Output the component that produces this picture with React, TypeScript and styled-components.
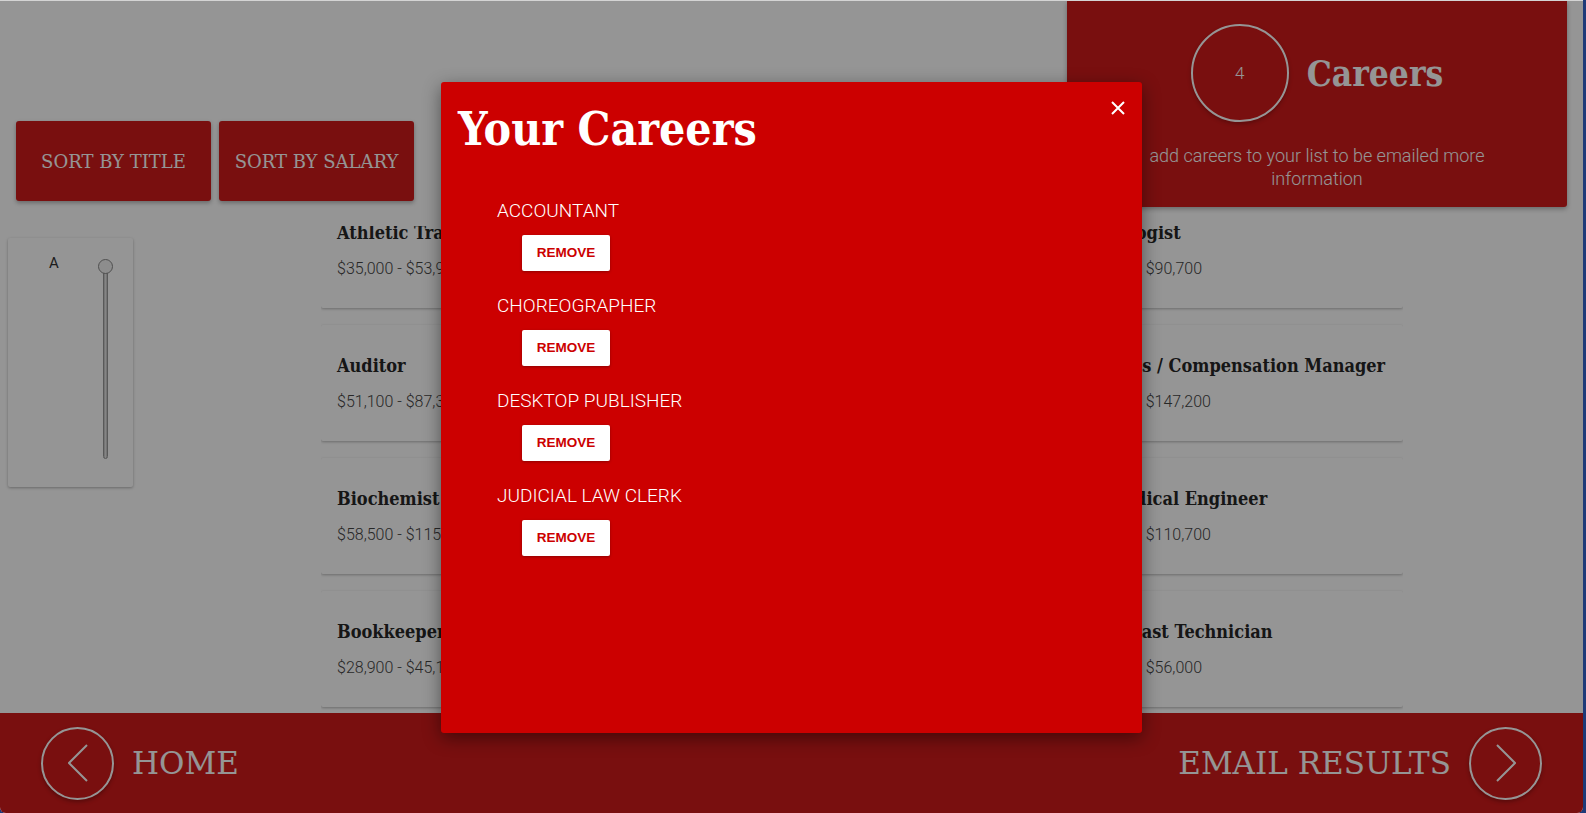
import React, { useLayoutEffect, useRef } from 'react';
import styled, { createGlobalStyle } from 'styled-components';

const slab = `"DejaVu Serif", "Liberation Serif", serif`;
const sans = `Roboto, "Liberation Sans", sans-serif`;
const red = '#d01a1a';

const GlobalStyle = createGlobalStyle`
  html, body {
    margin: 0;
    padding: 0;
    background: #1e3a78;
    overflow: hidden;
  }
  * { box-sizing: border-box; }
`;

const Screen = styled.div`
  position: relative;
  width: 1583px;
  height: 813px;
  background: #fff;
  border-top: 1px solid #d4d4d4;
  border-radius: 0 0 6px 6px;
  overflow: hidden;
  display: flex;
  flex-direction: column;
`;

const Header = styled.header`
  display: flex;
  justify-content: space-between;
  align-items: flex-end;
  height: 206px;
  padding: 0 16px;
  flex-shrink: 0;
`;

const SortGroup = styled.div`
  display: flex;
  gap: 8px;
  margin-bottom: 6px;
`;

const SortButton = styled.button`
  width: 195px;
  height: 80px;
  border: none;
  border-radius: 3px;
  background: ${red};
  color: #fff;
  font-family: ${slab};
  font-size: 18px;
  text-transform: uppercase;
  box-shadow: 0 2px 4px rgba(0, 0, 0, 0.3);
  cursor: pointer;
`;

const CareersPanel = styled.div`
  width: 500px;
  height: 206px;
  background: ${red};
  border-radius: 0 0 3px 3px;
  box-shadow: 0 2px 5px rgba(0, 0, 0, 0.3);
  display: flex;
  flex-direction: column;
  align-items: center;
  padding-top: 23px;
  color: #fff;
`;

const CountRow = styled.div`
  display: flex;
  align-items: center;
  gap: 18px;
`;

const CountCircle = styled.div`
  width: 98px;
  height: 98px;
  border: 2px solid #fff;
  border-radius: 50%;
  display: flex;
  align-items: center;
  justify-content: center;
  font-family: ${sans};
  font-weight: 300;
  font-size: 17px;
  box-shadow: 0 2px 4px rgba(0, 0, 0, 0.25);
`;

const PanelTitle = styled.span`
  font-family: ${slab};
  font-stretch: condensed;
  font-weight: bold;
  font-size: 35px;
`;

const PanelText = styled.p`
  margin: 22px 0 0;
  max-width: 380px;
  text-align: center;
  font-family: ${sans};
  font-weight: 300;
  font-size: 18px;
  line-height: 23px;
`;

const Body = styled.main`
  flex: 1;
  display: flex;
  min-height: 0;
`;

const Sidebar = styled.aside`
  padding: 31px 0 0 8px;
`;

const SliderCard = styled.div`
  width: 125px;
  height: 249px;
  background: #fff;
  border-radius: 2px;
  box-shadow: 0 1px 3px rgba(0, 0, 0, 0.3);
  display: flex;
  justify-content: space-between;
  align-items: flex-start;
  padding: 16px 20px 0 41px;
`;

const Letter = styled.span`
  font-family: ${sans};
  font-size: 15px;
  line-height: 18px;
  color: #333;
`;

const Slider = styled.div`
  position: relative;
  width: 15px;
  height: 200px;
  margin-top: 5px;
`;

const Track = styled.div`
  width: 5px;
  height: 193px;
  margin: 7px auto 0;
  border-radius: 3px;
  border: 1px solid #999;
  background: linear-gradient(to right, #bbb, #e4e4e4, #bbb);
`;

const Thumb = styled.div`
  position: absolute;
  top: 0;
  left: 0;
  width: 15px;
  height: 15px;
  border-radius: 50%;
  border: 1px solid #888;
  background: #f2f2f2;
`;

const ListViewport = styled.section`
  width: 1082px;
  margin: 19px 0 0 188px;
  overflow-y: auto;
  scrollbar-width: none;
  &::-webkit-scrollbar { display: none; }
`;

const CardGrid = styled.div`
  display: grid;
  grid-template-columns: repeat(3, 342px);
  column-gap: 28px;
  row-gap: 17px;
  padding: 0 2px 20px 0;
`;

const Card = styled.div`
  height: 116px;
  background: #fff;
  border-radius: 2px;
  box-shadow: 0 1px 3px rgba(0, 0, 0, 0.28);
  display: flex;
  flex-direction: column;
  justify-content: center;
  padding: 0 16px;
`;

const CardTitle = styled.h3`
  margin: 0 0 15px;
  font-family: ${slab};
  font-stretch: condensed;
  font-weight: bold;
  font-size: 18px;
  line-height: 22px;
  color: #262626;
  white-space: nowrap;
`;

const CardSalary = styled.span`
  font-family: ${sans};
  font-weight: 300;
  font-size: 16px;
  line-height: 19px;
  color: #444;
`;

const Footer = styled.footer`
  height: 100px;
  flex-shrink: 0;
  background: ${red};
  display: flex;
  justify-content: space-between;
  align-items: center;
  padding: 0 41px;
`;

const NavLink = styled.a`
  display: flex;
  align-items: center;
  gap: 18px;
  color: #fff;
  text-decoration: none;
  font-family: ${slab};
  font-size: 31px;
  text-transform: uppercase;
`;

const NavCircle = styled.span`
  width: 73px;
  height: 73px;
  border: 2px solid #fff;
  border-radius: 50%;
  display: flex;
  align-items: center;
  justify-content: center;
  box-shadow: 0 2px 4px rgba(0, 0, 0, 0.3);
`;

const Overlay = styled.div`
  position: absolute;
  inset: 0;
  background: rgba(0, 0, 0, 0.415);
  display: flex;
  align-items: center;
  justify-content: center;
`;

const Modal = styled.div`
  width: 701px;
  height: 651px;
  background: #cc0000;
  border-radius: 3px;
  box-shadow: 0 5px 18px rgba(0, 0, 0, 0.45);
  color: #fff;
`;

const ModalHeader = styled.div`
  display: flex;
  justify-content: space-between;
  align-items: flex-start;
  padding: 19px 17px 0 17px;
`;

const ModalTitle = styled.h2`
  margin: 0 0 2px;
  font-family: ${slab};
  font-stretch: condensed;
  font-weight: bold;
  font-size: 46px;
  line-height: 56px;
`;

const CloseButton = styled.button`
  display: flex;
  padding: 0;
  border: none;
  background: none;
  cursor: pointer;
`;

const CareerList = styled.ul`
  list-style: none;
  margin: 41px 0 0;
  padding: 0 0 0 56px;
`;

const CareerItem = styled.li`
  display: flex;
  flex-direction: column;
  align-items: flex-start;
`;

const CareerName = styled.span`
  font-family: ${sans};
  font-weight: 300;
  font-size: 19px;
  line-height: 22px;
`;

const RemoveButton = styled.button`
  width: 88px;
  height: 36px;
  margin: 13px 0 24px 25px;
  border: none;
  border-radius: 2px;
  background: #fff;
  color: #cc0000;
  font-family: "Liberation Sans", Arial, sans-serif;
  font-weight: bold;
  font-size: 13.5px;
  box-shadow: 0 1px 3px rgba(0, 0, 0, 0.3);
  cursor: pointer;
`;

const careers = [
  { title: 'Athletic Trainer', salary: '$35,000 - $53,900' },
  { title: 'Atmospheric Scientist', salary: '$51,600 - $125,800' },
  { title: 'Audiologist', salary: '$49,700 - $90,700' },
  { title: 'Auditor', salary: '$51,100 - $87,300' },
  { title: 'Automotive Technician', salary: '$25,400 - $58,200' },
  { title: 'Benefits / Compensation Manager', salary: '$68,900 - $147,200' },
  { title: 'Biochemist', salary: '$58,500 - $115,400' },
  { title: 'Biologist', salary: '$44,800 - $98,300' },
  { title: 'Biomedical Engineer', salary: '$52,300 - $110,700' },
  { title: 'Bookkeeper', salary: '$28,900 - $45,100' },
  { title: 'Brickmason', salary: '$31,500 - $64,900' },
  { title: 'Broadcast Technician', salary: '$22,200 - $56,000' },
  { title: 'Budget Analyst', salary: '$50,100 - $98,700' },
  { title: 'Bus Driver', salary: '$26,300 - $44,600' },
  { title: 'Butcher', salary: '$21,900 - $40,800' },
];

const saved = ['ACCOUNTANT', 'CHOREOGRAPHER', 'DESKTOP PUBLISHER', 'JUDICIAL LAW CLERK'];

const Chevron = ({ dir }: { dir: 'left' | 'right' }) => (
  <svg width="20" height="38" viewBox="0 0 20 38" fill="none">
    <polyline
      points={dir === 'left' ? '19,1 1,19 19,37' : '1,1 19,19 1,37'}
      stroke="#fff"
      strokeWidth="2"
    />
  </svg>
);

const App: React.FC = () => {
  const listRef = useRef<HTMLElement>(null);

  useLayoutEffect(() => {
    if (listRef.current) listRef.current.scrollTop = 34;
  }, []);

  return (
    <>
      <GlobalStyle />
      <Screen>
        <Header>
          <SortGroup>
            <SortButton>Sort by Title</SortButton>
            <SortButton>Sort by Salary</SortButton>
          </SortGroup>
          <CareersPanel>
            <CountRow>
              <CountCircle>{saved.length}</CountCircle>
              <PanelTitle>Careers</PanelTitle>
            </CountRow>
            <PanelText>add careers to your list to be emailed more information</PanelText>
          </CareersPanel>
        </Header>

        <Body>
          <Sidebar>
            <SliderCard>
              <Letter>A</Letter>
              <Slider>
                <Track />
                <Thumb />
              </Slider>
            </SliderCard>
          </Sidebar>
          <ListViewport ref={listRef}>
            <CardGrid>
              {careers.map((c) => (
                <Card key={c.title}>
                  <CardTitle>{c.title}</CardTitle>
                  <CardSalary>{c.salary}</CardSalary>
                </Card>
              ))}
            </CardGrid>
          </ListViewport>
        </Body>

        <Footer>
          <NavLink href="#">
            <NavCircle><Chevron dir="left" /></NavCircle>
            Home
          </NavLink>
          <NavLink href="#">
            Email Results
            <NavCircle><Chevron dir="right" /></NavCircle>
          </NavLink>
        </Footer>

        <Overlay>
          <Modal>
            <ModalHeader>
              <ModalTitle>Your Careers</ModalTitle>
              <CloseButton aria-label="Close">
                <svg width="14" height="14" viewBox="0 0 14 14">
                  <path d="M1 1L13 13M13 1L1 13" stroke="#fff" strokeWidth="2" />
                </svg>
              </CloseButton>
            </ModalHeader>
            <CareerList>
              {saved.map((name) => (
                <CareerItem key={name}>
                  <CareerName>{name}</CareerName>
                  <RemoveButton>REMOVE</RemoveButton>
                </CareerItem>
              ))}
            </CareerList>
          </Modal>
        </Overlay>
      </Screen>
    </>
  );
};

export default App;
